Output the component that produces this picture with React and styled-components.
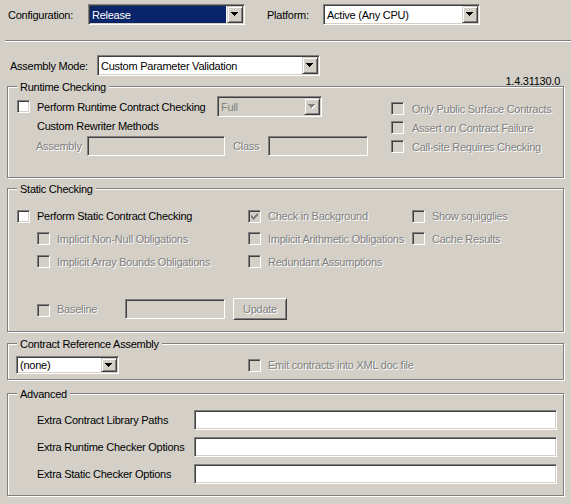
import React from "react";
import styled, { createGlobalStyle, css } from "styled-components";

const GlobalStyle = createGlobalStyle`
  html, body { margin: 0; padding: 0; background: #D4D0C8; }
  body {
    font-family: "Liberation Sans", Arial, sans-serif;
    font-size: 11px;
    letter-spacing: -0.25px;
    color: #000;
  }
`;

const FACE = "#D4D0C8";

const Page = styled.div`
  width: 571px;
  height: 504px;
  overflow: hidden;
  background: ${FACE};
`;

const TopRow = styled.div`
  display: flex;
  align-items: center;
  height: 21px;
  padding: 4px 0 0 8px;
`;

const AssemblyRow = styled.div`
  display: flex;
  align-items: center;
  height: 21px;
  margin-top: 13px;
  padding-left: 10px;
`;

const Label = styled.span`
  flex: none;
  width: ${(p) => p.$w}px;
  margin-left: ${(p) => p.$ml || 0}px;
  white-space: nowrap;
  ${(p) =>
    p.$dim &&
    css`
      color: #808080;
      text-shadow: 1px 1px 0 #fff;
    `}
`;

const Separator = styled.div`
  margin: 15px 0 0 5px;
  border-top: 1px solid #808080;
  border-bottom: 1px solid #fff;
`;

const Version = styled.div`
  height: 10px;
  line-height: 11px;
  text-align: right;
  padding-right: 11px;
`;

const sunken = css`
  box-sizing: border-box;
  border: 1px solid;
  border-color: #808080 #fff #fff #808080;
  box-shadow: inset 1px 1px 0 #404040, inset -1px -1px 0 ${FACE};
`;

const SelectBox = styled.div`
  ${sunken};
  flex: none;
  display: flex;
  width: ${(p) => p.$w}px;
  height: ${(p) => p.$h || 21}px;
  padding: 1px;
  margin-left: ${(p) => p.$ml || 0}px;
  background: ${(p) => (p.$disabled ? FACE : "#fff")};
`;

const SelectText = styled.div`
  flex: 1;
  display: flex;
  align-items: center;
  padding-left: 2px;
  margin-right: 1px;
  white-space: nowrap;
  overflow: hidden;
  background: ${(p) => (p.$selected ? "#0A246A" : "transparent")};
  color: ${(p) => (p.$selected ? "#fff" : p.$disabled ? "#808080" : "#000")};
`;

const DropButton = styled.div`
  flex: none;
  box-sizing: border-box;
  width: 16px;
  display: flex;
  align-items: center;
  justify-content: center;
  background: ${FACE};
  border: 1px solid;
  border-color: ${FACE} #404040 #404040 ${FACE};
  box-shadow: inset 1px 1px 0 #fff, inset -1px -1px 0 #808080;
  svg { display: block; }
`;

const TextBox = styled.div`
  ${sunken};
  flex: none;
  width: ${(p) => (p.$w ? `${p.$w}px` : "auto")};
  height: 20px;
  background: ${(p) => (p.$disabled ? FACE : "#fff")};
`;

const PushButton = styled.div`
  flex: none;
  box-sizing: border-box;
  width: ${(p) => p.$w}px;
  height: 22px;
  margin-left: ${(p) => p.$ml || 0}px;
  display: flex;
  align-items: center;
  justify-content: center;
  background: ${FACE};
  border: 1px solid;
  border-color: #fff #404040 #404040 #fff;
  box-shadow: inset 1px 1px 0 ${FACE}, inset -1px -1px 0 #808080;
  color: ${(p) => (p.$disabled ? "#808080" : "#000")};
  text-shadow: ${(p) => (p.$disabled ? "1px 1px 0 #fff" : "none")};
`;

const Box = styled.div`
  ${sunken};
  flex: none;
  width: 13px;
  height: 13px;
  padding: 2px;
  margin-top: ${(p) => p.$mt || 0}px;
  background: ${(p) => (p.$disabled ? FACE : "#fff")};
  svg { display: block; }
`;

const CheckRowWrap = styled.div`
  display: flex;
  align-items: center;
  gap: ${(p) => p.$gap || 7}px;
  width: ${(p) => (p.$w ? `${p.$w}px` : "auto")};
  height: ${(p) => (p.$h ? `${p.$h}px` : "auto")};
  padding-left: ${(p) => p.$indent || 0}px;
  margin-left: ${(p) => p.$ml || 0}px;
  white-space: nowrap;
`;

const CheckText = styled.span`
  color: ${(p) => (p.$disabled ? "#808080" : "#000")};
  text-shadow: ${(p) => (p.$disabled ? "1px 1px 0 #fff" : "none")};
`;

const Group = styled.div`
  position: relative;
  box-sizing: border-box;
  width: 557px;
  height: ${(p) => p.$h}px;
  margin: ${(p) => p.$mt || 0}px 0 0 7px;
  border: 1px solid #808080;
  box-shadow: inset 1px 1px 0 #fff, 1px 1px 0 #fff;
`;

const Legend = styled.span`
  position: absolute;
  top: -6px;
  left: 9px;
  padding: 0 3px;
  line-height: 13px;
  background: ${FACE};
  white-space: nowrap;
`;

const RuntimeBody = styled.div`
  display: flex;
`;

const RuntimeLeft = styled.div`
  flex: none;
  width: 383px;
  box-sizing: border-box;
  padding: 9px 0 0 9px;
`;

const RuntimeRight = styled.div`
  display: flex;
  flex-direction: column;
  padding-top: 12px;
`;

const RuntimeFirstRow = styled.div`
  display: grid;
  grid-template-columns: 20px 180px 105px;
  align-items: center;
  height: 21px;
`;

const Caption = styled.div`
  line-height: 13px;
  margin: 3px 0 0 20px;
`;

const FieldRow = styled.div`
  display: flex;
  align-items: center;
  height: 20px;
  margin-top: 3px;
  padding-left: 19px;
`;

const StaticGrid = styled.div`
  display: grid;
  grid-template-columns: 231px 164px 1fr;
  grid-template-rows: 22px 23px 23px;
  align-items: center;
  padding: 16px 0 0 9px;
`;

const BaselineRow = styled.div`
  display: flex;
  align-items: center;
  height: 22px;
  margin-top: 25px;
  padding-left: 29px;
`;

const ContractRow = styled.div`
  display: flex;
  align-items: center;
  padding: 12px 0 0 8px;
`;

const AdvancedGrid = styled.div`
  display: grid;
  grid-template-columns: 157px 363px;
  grid-auto-rows: 20px;
  row-gap: 7px;
  align-items: center;
  padding: 16px 0 0 29px;
`;

const Arrow = ({ disabled }) => (
  <svg width="8" height="5" viewBox="0 0 8 5" shapeRendering="crispEdges">
    {disabled && (
      <g fill="#fff">
        <rect x="1" y="1" width="7" height="1" />
        <rect x="2" y="2" width="5" height="1" />
        <rect x="3" y="3" width="3" height="1" />
        <rect x="4" y="4" width="1" height="1" />
      </g>
    )}
    <g fill={disabled ? "#808080" : "#000"}>
      <rect x="0" y="0" width="7" height="1" />
      <rect x="1" y="1" width="5" height="1" />
      <rect x="2" y="2" width="3" height="1" />
      <rect x="3" y="3" width="1" height="1" />
    </g>
  </svg>
);

const CheckMark = ({ color }) => (
  <svg width="7" height="7" viewBox="0 0 7 7" shapeRendering="crispEdges" fill={color}>
    <rect x="0" y="2" width="1" height="3" />
    <rect x="1" y="3" width="1" height="3" />
    <rect x="2" y="4" width="1" height="3" />
    <rect x="3" y="3" width="1" height="3" />
    <rect x="4" y="2" width="1" height="3" />
    <rect x="5" y="1" width="1" height="3" />
    <rect x="6" y="0" width="1" height="3" />
  </svg>
);

const Select = ({ w, h, ml, value, selected, disabled }) => (
  <SelectBox $w={w} $h={h} $ml={ml} $disabled={disabled}>
    <SelectText $selected={selected} $disabled={disabled}>
      {value}
    </SelectText>
    <DropButton>
      <Arrow disabled={disabled} />
    </DropButton>
  </SelectBox>
);

const Checkbox = ({ checked, disabled, mt }) => (
  <Box $disabled={disabled} $mt={mt}>
    {checked && <CheckMark color={disabled ? "#808080" : "#000"} />}
  </Box>
);

const CheckRow = ({ children, disabled, checked, h, w, indent, ml, gap, boxMt }) => (
  <CheckRowWrap $h={h} $w={w} $indent={indent} $ml={ml} $gap={gap}>
    <Checkbox disabled={disabled} checked={checked} mt={boxMt} />
    <CheckText $disabled={disabled}>{children}</CheckText>
  </CheckRowWrap>
);

export default function App() {
  return (
    <Page>
      <GlobalStyle />
      <TopRow>
        <Label $w={80}>Configuration:</Label>
        <Select w={157} value="Release" selected />
        <Label $w={56} $ml={22}>
          Platform:
        </Label>
        <Select w={157} value="Active (Any CPU)" />
      </TopRow>
      <Separator />
      <AssemblyRow>
        <Label $w={87}>Assembly Mode:</Label>
        <Select w={223} value="Custom Parameter Validation" />
      </AssemblyRow>
      <Version>1.4.31130.0</Version>

      <Group $h={92}>
        <Legend>Runtime Checking</Legend>
        <RuntimeBody>
          <RuntimeLeft>
            <RuntimeFirstRow>
              <Checkbox />
              <span>Perform Runtime Contract Checking</span>
              <Select w={105} value="Full" disabled />
            </RuntimeFirstRow>
            <Caption>Custom Rewriter Methods</Caption>
            <FieldRow>
              <Label $w={51} $dim>
                Assembly
              </Label>
              <TextBox $w={138} $disabled />
              <Label $w={35} $ml={8} $dim>
                Class
              </Label>
              <TextBox $w={100} $disabled />
            </FieldRow>
          </RuntimeLeft>
          <RuntimeRight>
            <CheckRow h={19} gap={8} disabled>
              Only Public Surface Contracts
            </CheckRow>
            <CheckRow h={19} gap={8} disabled>
              Assert on Contract Failure
            </CheckRow>
            <CheckRow h={19} gap={8} disabled>
              Call-site Requires Checking
            </CheckRow>
          </RuntimeRight>
        </RuntimeBody>
      </Group>

      <Group $h={144} $mt={10}>
        <Legend>Static Checking</Legend>
        <StaticGrid>
          <CheckRow>Perform Static Contract Checking</CheckRow>
          <CheckRow disabled checked>
            Check in Background
          </CheckRow>
          <CheckRow disabled>Show squigglies</CheckRow>
          <CheckRow indent={20} disabled>
            Implicit Non-Null Obligations
          </CheckRow>
          <CheckRow disabled>Implicit Arithmetic Obligations</CheckRow>
          <CheckRow disabled>Cache Results</CheckRow>
          <CheckRow indent={20} disabled>
            Implicit Array Bounds Obligations
          </CheckRow>
          <CheckRow disabled>Redundant Assumptions</CheckRow>
        </StaticGrid>
        <BaselineRow>
          <CheckRow w={88} disabled boxMt={3}>
            Baseline
          </CheckRow>
          <TextBox $w={100} $disabled />
          <PushButton $w={54} $ml={8} $disabled>
            Update
          </PushButton>
        </BaselineRow>
      </Group>

      <Group $h={37} $mt={11}>
        <Legend>Contract Reference Assembly</Legend>
        <ContractRow>
          <Select w={103} h={18} value="(none)" />
          <CheckRow ml={129} disabled>
            Emit contracts into XML doc file
          </CheckRow>
        </ContractRow>
      </Group>

      <Group $h={103} $mt={13}>
        <Legend>Advanced</Legend>
        <AdvancedGrid>
          <span>Extra Contract Library Paths</span>
          <TextBox />
          <span>Extra Runtime Checker Options</span>
          <TextBox />
          <span>Extra Static Checker Options</span>
          <TextBox />
        </AdvancedGrid>
      </Group>
    </Page>
  );
}
